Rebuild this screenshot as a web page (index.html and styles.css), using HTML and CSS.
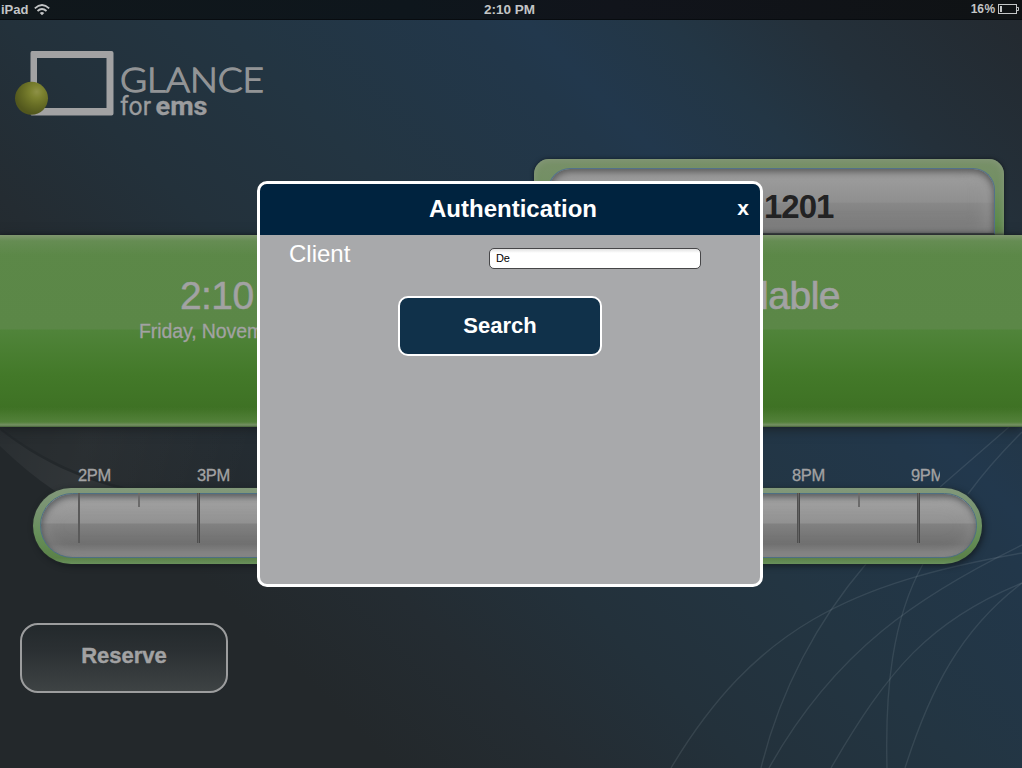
FILE: index.html
```html
<!DOCTYPE html>
<html lang="en">
<head>
<meta charset="utf-8">
<title>Glance for EMS</title>
<link rel="stylesheet" href="styles.css">
</head>
<body>
<div class="screen">
  <svg class="backdrop" width="1022" height="768" viewBox="0 0 1022 768" fill="none">
    <defs>
      <linearGradient id="sweep" x1="0" y1="430" x2="240" y2="500" gradientUnits="userSpaceOnUse">
        <stop offset="0" stop-color="#fff" stop-opacity=".03"/>
        <stop offset=".35" stop-color="#fff" stop-opacity=".065"/>
        <stop offset="1" stop-color="#fff" stop-opacity="0"/>
      </linearGradient>
    </defs>
    <path d="M0 427C35 455 80 477 125 487H260V427Z" fill="url(#sweep)" opacity=".5"/>
    <path d="M0 430V446Q28 473 55 491H130C80 480 38 460 0 430Z" fill="url(#sweep)"/>
    <g stroke="#a5b5bf" stroke-opacity=".15" stroke-width="1.4">
      <path d="M671 768C755 628 850 583 1022 553"/>
      <path d="M761 768C780 690 818 620 866 564M940 487L1009 427"/>
      <path d="M769 768C835 650 920 595 1022 545"/>
      <path d="M831 768C888 670 930 620 1022 583"/>
      <path d="M887 768C885 690 892 620 923 564M968 494Q990 464 1022 432"/>
      <path d="M905 768C930 690 960 630 1022 583"/>
    </g>
  </svg>

  <header class="status">
    <div class="status-side">
      <span>iPad</span>
      <svg class="wifi" width="16" height="12" viewBox="0 0 16 12" fill="none" stroke="#c3c5c6" stroke-width="1.8">
        <path d="M.8 4.3Q8-2.3 15.2 4.3"/>
        <path d="M3.500 7Q8 3 12.500 7"/>
        <path d="M5.700 9Q8 7 10.300 9L8 11.300Z" fill="#c3c5c6" stroke="none"/>
      </svg>
    </div>
    <span class="status-time">2:10 PM</span>
    <div class="status-side status-right">
      <span class="percent">16&#8202;%</span>
      <svg width="21" height="12" viewBox="0 0 21 12" fill="none" stroke="#c3c5c6">
        <rect x=".5" y=".5" width="18" height="9"/>
        <path d="M19 3.500H20.500V6.500H19"/>
        <rect x="2" y="2" width="2" height="6" fill="#c3c5c6" stroke="none"/>
      </svg>
    </div>
  </header>

  <section class="top">
    <svg class="logo" width="254" height="76" viewBox="12 47 254 76">
      <defs>
        <radialGradient id="ball" cx=".66" cy=".3" r=".68">
          <stop offset="0" stop-color="#8e9147"/>
          <stop offset=".28" stop-color="#7c8230"/>
          <stop offset=".65" stop-color="#656b24"/>
          <stop offset="1" stop-color="#52571d"/>
        </radialGradient>
      </defs>
      <path d="M32 51H111.500Q113.500 51 113.500 53V113.500Q113.500 115.500 111.500 115.500H32Q30.500 115.500 30.500 114V53Q30.500 51 32 51ZM37 58V108H106.500V58Z" fill="#a2a2a3" fill-rule="evenodd"/>
      <circle cx="31.500" cy="98.300" r="16.500" fill="url(#ball)"/>
      <text class="logo-name" x="120" y="91.500" textLength="144" lengthAdjust="spacingAndGlyphs">GLANCE</text>
      <text class="logo-sub" x="120" y="115" textLength="31" lengthAdjust="spacingAndGlyphs">for</text>
      <text class="logo-sub logo-strong" x="155.500" y="115" textLength="52" lengthAdjust="spacingAndGlyphs">ems</text>
    </svg>
    <div class="room"><div class="room-face">1201</div></div>
  </section>

  <section class="banner">
    <div class="now">
      <div class="clock">2:10 PM</div>
      <div class="date">Friday, November 18</div>
    </div>
    <div class="state">Available</div>
  </section>

  <section class="timeline">
    <div class="hours">
      <span>2PM</span><span>3PM</span><span>4PM</span><span>5PM</span><span>6PM</span><span>7PM</span><span>8PM</span><span class="cut">9PM</span>
    </div>
    <div class="tube"><div class="tube-face">
      <i class="tick thin"></i><i class="tick half"></i><i class="tick"></i><i class="tick half"></i><i class="tick"></i><i class="tick half"></i><i class="tick"></i><i class="tick half"></i><i class="tick"></i><i class="tick half"></i><i class="tick"></i><i class="tick half"></i><i class="tick"></i><i class="tick half"></i><i class="tick"></i>
    </div></div>
  </section>

  <button class="reserve">Reserve</button>

  <div class="dialog">
    <div class="dialog-head">
      <h1>Authentication</h1>
      <span class="close">x</span>
    </div>
    <div class="field">
      <label for="client">Client</label>
      <input id="client" value="De">
    </div>
    <button class="search">Search</button>
  </div>
</div>
</body>
</html>
```
FILE: styles.css
```css
* { box-sizing: border-box; }

body {
  margin: 0;
  font-family: "Liberation Sans", Arial, sans-serif;
}

button { font-family: inherit; padding: 0; }

.screen {
  position: relative;
  display: flex;
  flex-direction: column;
  width: 1022px;
  height: 768px;
  overflow: hidden;
  background: linear-gradient(45deg, #23282b 0%, #23282b 22%, #242c32 32%, #23313b 42%, #233542 54%, #22374a 68%, #22384d 71%, #233645 79%, #24303a 87%, #23292f 100%);
}

.backdrop { position: absolute; left: 0; top: 0; }

.status {
  position: relative;
  display: flex;
  justify-content: space-between;
  height: 20px;
  padding: 0 3px 0 1px;
  line-height: 19px;
  font-size: 13px;
  font-weight: bold;
  color: #c3c5c6;
  background: linear-gradient(90deg, #10171b, #0e161c 40%, #11141b 60%, #0f1214);
  border-bottom: 1px solid #080c10;
}

.status-time { width: 52px; font-size: 13.5px; white-space: nowrap; }
.status-side { display: flex; width: 200px; gap: 6px; align-items: center; height: 19px; }
.status-right { justify-content: flex-end; gap: 3px; }
.percent { font-size: 12px; letter-spacing: -.2px; }
.wifi { margin-top: 1px; }

.top {
  position: relative;
  display: flex;
  justify-content: space-between;
  height: 215px;
  padding: 27px 18px 0 12px;
}

.logo-name { font: 300 34px Lato, sans-serif; fill: #929496; stroke: #929496; stroke-width: 1.3; }
.logo-sub { font: 25px Roboto, "Liberation Sans", sans-serif; fill: #9b9c9e; stroke: #9b9c9e; stroke-width: .3; }
.logo-strong { font-weight: bold; }

.room {
  align-self: flex-end;
  width: 470px;
  height: 76px;
  padding: 9px 9px 0 14px;
  border-radius: 15px 15px 0 0;
  background: linear-gradient(#789069, #718f62 40%, #5e8a4d 80%, #588142);
  box-shadow: inset 0 0 7px #8a9a7e, 0 0 4px rgba(0, 0, 0, .5);
}

.room-face {
  height: 67px;
  padding: 21px 0 0 215px;
  border: 1.5px solid #52718a;
  border-bottom: 2px solid #46484a;
  border-radius: 22px 22px 0 0;
  background: linear-gradient(#a0a0a0, #8f8f8f 52%, #888 53%, #747474);
  box-shadow: inset 0 3px 7px rgba(0, 0, 0, .45), inset -10px -5px 15px rgba(155, 155, 155, .45);
  font-size: 33px;
  line-height: 34px;
  font-weight: bold;
  letter-spacing: -1px;
  color: #222223;
}

.banner {
  position: relative;
  display: flex;
  justify-content: space-between;
  height: 192px;
  padding: 37px 182px 0 139px;
  color: #a2a2a3;
  background:
    linear-gradient(#80976f, rgba(111, 145, 94, .5) 6px, transparent 20px),
    linear-gradient(transparent 172px, rgba(100, 140, 75, .5) 187px, #759064 190px, #456237 192px),
    linear-gradient(#5c8848 0, #5b8747 94px, #50843a 95px, #437929 140px, #3e7124 175px, #427629);
  box-shadow: 0 2px 10px rgba(24, 28, 30, .8), 0 -1px 2px rgba(20, 25, 30, .5);
}

.now { white-space: nowrap; }
.clock { padding-left: 41px; font-size: 39px; line-height: 48px; letter-spacing: -.6px; -webkit-text-stroke: .5px #a2a2a3; }
.date { font-size: 19.5px; line-height: 22px; letter-spacing: -.1px; -webkit-text-stroke: .3px #a2a2a3; }
.state { font-size: 39px; line-height: 48px; letter-spacing: -.5px; -webkit-text-stroke: .7px #a2a2a3; }

.timeline { position: relative; padding: 37px 40px 0 33px; }

.hours {
  display: grid;
  grid-template-columns: repeat(8, 119px);
  height: 24px;
  padding-left: 45px;
  font-size: 16.5px;
  line-height: 23px;
  letter-spacing: -.4px;
  color: #a2a2a3;
  -webkit-text-stroke: .3px #a2a2a3;
}

.cut { width: 29px; overflow: hidden; }

.tube {
  height: 76px;
  padding: 5px 5px 6px 7px;
  border-radius: 38px;
  background: linear-gradient(#82987a, #779370 30%, #67905a 60%, #5b8149 92%, #69905b);
  box-shadow: 2px 2px 6px rgba(15, 20, 24, .7), 0 0 2px #35443a;
}

.tube-face {
  display: flex;
  height: 65px;
  padding-left: 37px;
  border: 1.5px solid #4d6f83;
  border-radius: 33px;
  background: linear-gradient(#9a9a9a, #a0a0a0 8px, #919191 29px, #818181 30px, #6f6f6f 50px, #858585);
  box-shadow: inset 1px 3px 6px rgba(25, 30, 34, .5), inset 0 0 18px rgba(160, 160, 160, .55);
}

.tick {
  flex: none;
  width: 3px;
  height: 50px;
  margin: -1px 58px 0 0;
  background: linear-gradient(90deg, #505050 34%, #646464 34%, #646464 66%, #484848 66%);
}

.tick.thin { width: 2px; background: #5a5a5a; }
.tick.half { width: 2px; height: 14px; margin-right: 57px; background: #6b6b6b; }
.tick:last-child { margin-right: 0; }

.reserve {
  position: relative;
  width: 208px;
  height: 70px;
  margin: 59px 0 0 20px;
  padding-bottom: 5px;
  border: 2px solid #9c9d9e;
  border-radius: 18px;
  background: linear-gradient(#23292c, #2b3033 40%, #3e4344);
  color: #a2a2a3;
  font-size: 22px;
  font-weight: bold;
  -webkit-text-stroke: .4px #a2a2a3;
}

.dialog {
  position: absolute;
  left: 257px;
  top: 181px;
  display: flex;
  flex-direction: column;
  width: 506px;
  height: 406px;
  border: 3px solid #fff;
  border-radius: 10px;
  overflow: hidden;
  background: #a8a9ab;
  color: #fff;
}

.dialog-head {
  display: flex;
  justify-content: space-between;
  height: 51px;
  padding: 0 11px 0 169px;
  background: #00233f;
  font-weight: bold;
}

h1 { margin: 0; font-size: 24px; line-height: 50px; }
.close { font-size: 21px; line-height: 48px; }

.field {
  display: grid;
  grid-template-columns: 200px 212px;
  height: 61px;
  padding-left: 29px;
}

label { font-size: 24px; line-height: 38px; }

input {
  width: 212px;
  height: 21px;
  margin-top: 13px;
  padding: 0 6px 1px;
  border: 1px solid #464648;
  border-radius: 5px;
  background: linear-gradient(#e2e2e2, #fff 4px);
  font: 11px "Liberation Sans", Arial, sans-serif;
  letter-spacing: -.3px;
  color: #000;
}

.search {
  width: 204px;
  height: 60px;
  margin-left: 138px;
  border: 2px solid #fff;
  border-radius: 10px;
  background: #10314a;
  color: #fff;
  font-size: 22px;
  font-weight: bold;
}
```
